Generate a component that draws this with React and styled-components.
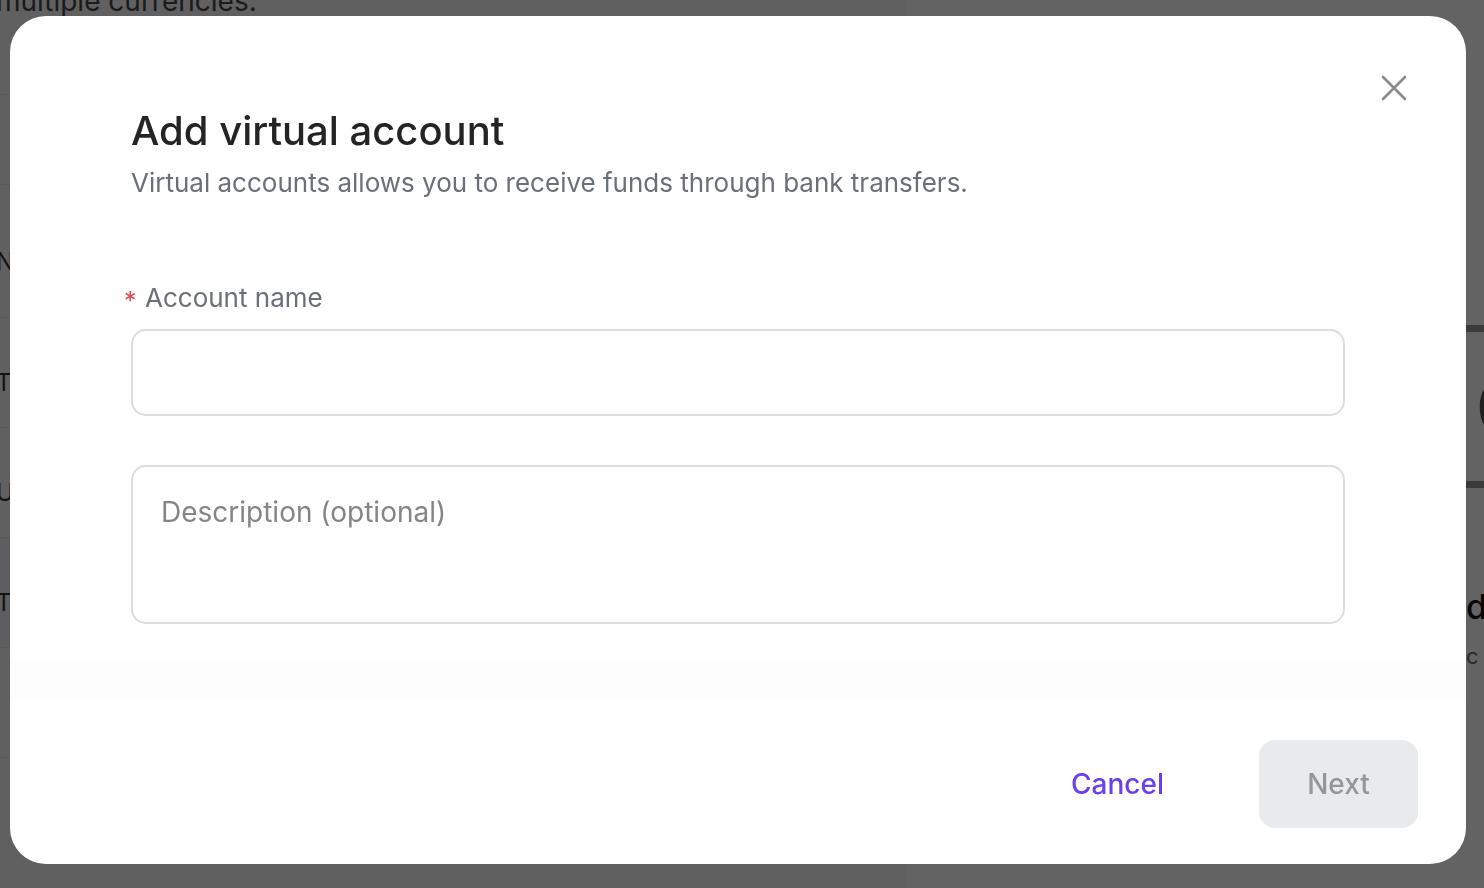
import React from 'react';
import styled, { createGlobalStyle } from 'styled-components';

const GlobalStyle = createGlobalStyle`
  html, body {
    margin: 0;
    padding: 0;
    height: 100%;
    overflow: hidden;
  }

  body {
    font-family: Inter, "Noto Sans", "Liberation Sans", sans-serif;
    color: #262626;
  }

  * {
    box-sizing: border-box;
  }
`;

const rows = [
  { letter: '', height: 90 },
  { letter: 'N', height: 133 },
  { letter: 'T', height: 110 },
  { letter: 'U', height: 110 },
  { letter: 'T', height: 110, selected: true },
  { letter: '', height: 110 },
];

function CloseIcon() {
  return (
    <svg width="28" height="28" viewBox="0 0 28 28" fill="none">
      <path
        d="M3 3L25 25M25 3L3 25"
        stroke="#8b8b8b"
        strokeWidth="2.6"
        strokeLinecap="round"
      />
    </svg>
  );
}

function App() {
  return (
    <>
      <GlobalStyle />

      <Page>
        <LeftPane>
          <Intro>multiple currencies.</Intro>
          {rows.map((row, i) => (
            <Row key={i} height={row.height} selected={row.selected}>
              {row.letter}
            </Row>
          ))}
        </LeftPane>

        <RightPane>
          <BalanceCard>
            <span>C</span>
          </BalanceCard>
          <SideHeading>d</SideHeading>
          <SideText>c</SideText>
        </RightPane>
      </Page>

      <Overlay>
        <Modal role="dialog" aria-modal="true">
          <CloseButton aria-label="Close">
            <CloseIcon />
          </CloseButton>

          <Body>
            <Title>Add virtual account</Title>
            <Subtitle>Virtual accounts allows you to receive funds through bank transfers.</Subtitle>

            <Field>
              <Label>
                <Required>*</Required>
                Account name
              </Label>
              <TextInput type="text" />
            </Field>

            <TextArea placeholder="Description (optional)" />

            <ScrollFade />
          </Body>

          <Footer>
            <TextButton>Cancel</TextButton>
            <PrimaryButton disabled>Next</PrimaryButton>
          </Footer>
        </Modal>
      </Overlay>
    </>
  );
}

const Page = styled.div`
  display: grid;
  grid-template-columns: 906px 1fr;
  height: 100vh;
  overflow: hidden;
  background: #ffffff;
`;

const LeftPane = styled.div`
  display: flex;
  flex-direction: column;
  margin-left: -4px;
  background: #f8f8f8;
`;

const Intro = styled.div`
  flex-shrink: 0;
  height: 109px;
  margin-top: -14px;
  font-size: 28px;
  line-height: 30px;
  color: #474747;
  border-bottom: 1px solid #e6e6e6;
`;

const Row = styled.div`
  display: flex;
  align-items: center;
  flex-shrink: 0;
  height: ${props => props.height}px;
  padding-top: 20px;
  font-size: 24px;
  color: #333333;
  border-bottom: 1px solid #e6e6e6;
  background: ${props => props.selected ? '#f1f2f7' : 'transparent'};
`;

const RightPane = styled.div`
  display: flex;
  flex-direction: column;
  padding-left: 520px;
  padding-top: 325px;
`;

const BalanceCard = styled.div`
  display: flex;
  align-items: center;
  height: 163px;
  width: 400px;
  padding-left: 42px;
  border: 7px solid #999999;
  border-radius: 14px;
  font-size: 80px;
  color: #555555;
`;

const SideHeading = styled.div`
  margin-top: 98px;
  padding-left: 40px;
  font-size: 34px;
  font-weight: 500;
  color: #141414;
`;

const SideText = styled.div`
  margin-top: 16px;
  padding-left: 40px;
  font-size: 22px;
  color: #6a6a6a;
`;

const Overlay = styled.div`
  position: fixed;
  inset: 0;
  display: flex;
  padding: 16px 18px 24px 10px;
  background: rgba(0, 0, 0, 0.61);
`;

const Modal = styled.div`
  position: relative;
  flex: 1;
  display: flex;
  flex-direction: column;
  background: #ffffff;
  border-radius: 36px;
  overflow: hidden;
`;

const CloseButton = styled.button`
  position: absolute;
  top: 58px;
  right: 58px;
  display: flex;
  padding: 0;
  border: 0;
  background: none;
  cursor: pointer;
`;

const Body = styled.div`
  flex: 1;
  display: flex;
  flex-direction: column;
  padding: 93px 121px 0 121px;
`;

const Title = styled.h2`
  margin: 0;
  font-size: 40px;
  line-height: 44px;
  font-weight: 500;
  color: #242424;
`;

const Subtitle = styled.p`
  margin: 14px 0 0;
  font-size: 26px;
  line-height: 32px;
  color: #6b6f76;
`;

const Field = styled.div`
  display: flex;
  flex-direction: column;
  margin-top: 83px;
`;

const Label = styled.label`
  position: relative;
  font-size: 26px;
  line-height: 32px;
  color: #6b6f76;
  padding-left: 14px;
`;

const Required = styled.span`
  position: absolute;
  left: -7px;
  top: 3px;
  font-size: 25px;
  color: #e5484d;
`;

const TextInput = styled.input`
  height: 87px;
  margin-top: 15px;
  padding: 0 30px;
  font: inherit;
  font-size: 28px;
  border: 2px solid #dcdde0;
  border-radius: 15px;
  outline: none;
`;

const TextArea = styled.textarea`
  height: 159px;
  margin-top: 49px;
  padding: 27px 28px;
  font-family: inherit;
  font-size: 28px;
  line-height: 36px;
  border: 2px solid #dcdde0;
  border-radius: 15px;
  resize: none;
  outline: none;

  &::placeholder {
    color: #858585;
  }
`;

const ScrollFade = styled.div`
  height: 40px;
  margin: 36px -121px 0;
  background: #fdfdfd;
`;

const Footer = styled.div`
  display: flex;
  justify-content: flex-end;
  align-items: center;
  gap: 62px;
  padding: 0 48px 36px;
`;

const TextButton = styled.button`
  width: 159px;
  height: 88px;
  padding: 0;
  border: 0;
  background: none;
  font-family: inherit;
  font-size: 28px;
  font-weight: 500;
  color: #6b3ef0;
  cursor: pointer;
`;

const PrimaryButton = styled.button`
  width: 159px;
  height: 88px;
  padding: 0;
  border: 0;
  border-radius: 16px;
  background: #e9eaec;
  font-family: inherit;
  font-size: 28px;
  font-weight: 500;
  color: #969696;

  &:disabled {
    cursor: not-allowed;
  }
`;

export default App;
